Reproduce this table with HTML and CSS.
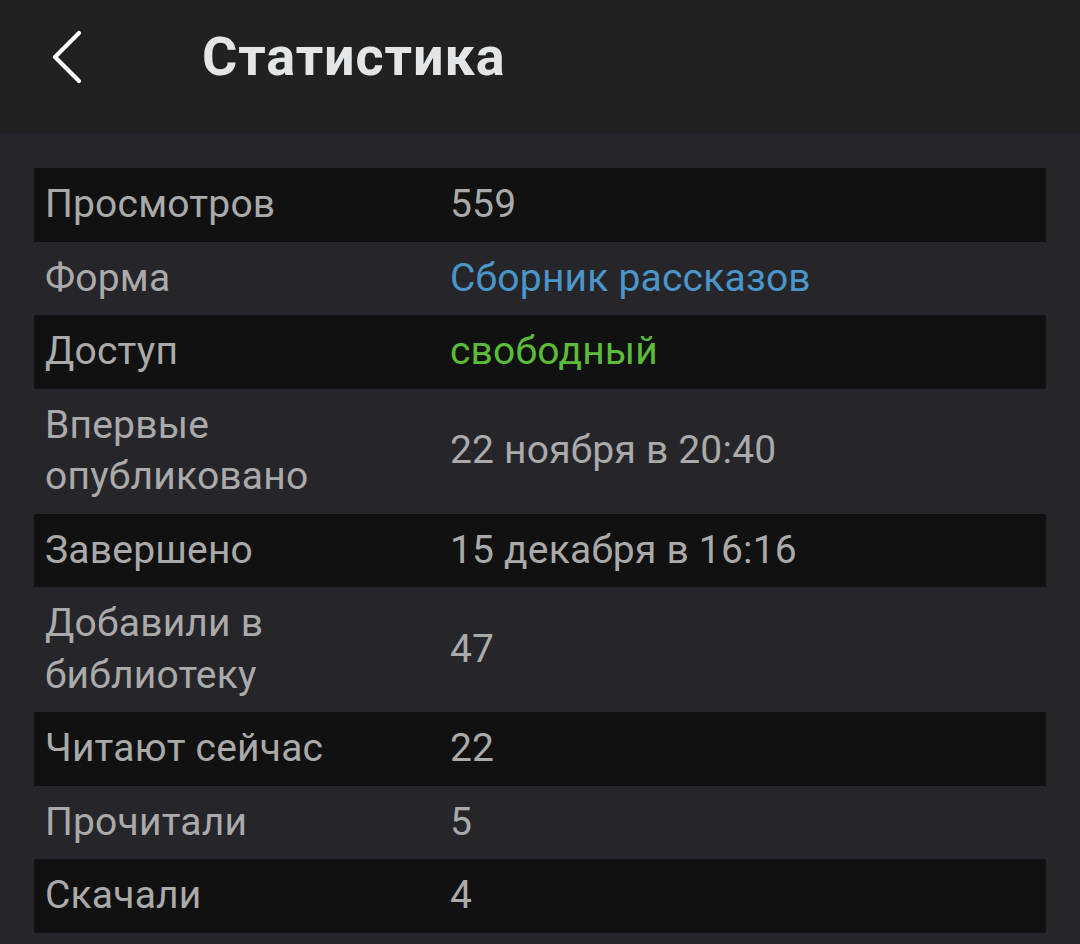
FILE: index.html
```html
<!DOCTYPE html>
<html lang="ru">
<head>
<meta charset="utf-8">
<title>Статистика</title>
<link rel="stylesheet" href="styles.css">
</head>
<body>
<header class="topbar">
  <button class="back" aria-label="Назад">
    <svg width="40" height="56" viewBox="0 0 40 56"><path d="M31 4 L7 28 L31 52" fill="none" stroke="#ffffff" stroke-width="4.2" stroke-linecap="round" stroke-linejoin="round"/></svg>
  </button>
  <h1 class="title">Статистика</h1>
</header>
<main class="content">
  <div class="table">
    <div class="row dark"><div class="label">Просмотров</div><div class="value">559</div></div>
    <div class="row"><div class="label">Форма</div><div class="value link">Сборник рассказов</div></div>
    <div class="row dark"><div class="label">Доступ</div><div class="value free">свободный</div></div>
    <div class="row"><div class="label">Впервые<br>опубликовано</div><div class="value">22 ноября в 20:40</div></div>
    <div class="row dark"><div class="label">Завершено</div><div class="value">15 декабря в 16:16</div></div>
    <div class="row"><div class="label">Добавили в<br>библиотеку</div><div class="value">47</div></div>
    <div class="row dark"><div class="label">Читают сейчас</div><div class="value">22</div></div>
    <div class="row"><div class="label">Прочитали</div><div class="value">5</div></div>
    <div class="row dark"><div class="label">Скачали</div><div class="value">4</div></div>
  </div>
</main>
</body>
</html>
```
FILE: styles.css
```css
html, body {
  margin: 0;
  padding: 0;
  background: #26262a;
  font-family: Roboto, "Noto Sans", "Liberation Sans", sans-serif;
}
.topbar {
  height: 133px;
  background: #212121;
  display: flex;
  align-items: center;
  box-sizing: border-box;
  padding: 0 0 20px 48px;
}
.back {
  background: none;
  border: 0;
  padding: 0;
  margin: 0;
  width: 40px;
  height: 56px;
  display: flex;
  cursor: pointer;
}
.title {
  margin: 0 0 0 114px;
  font-size: 54px;
  font-weight: 700;
  color: #e3e5e7;
  letter-spacing: 0.9px;
}
.content {
  padding: 35px 34px 11px 34px;
}
.table {
  display: flex;
  flex-direction: column;
}
.row {
  display: flex;
  align-items: center;
  padding: 11px 0;
  font-size: 39px;
  line-height: 51.5px;
  letter-spacing: 0.2px;
  color: #aaaaaa;
}
.row.dark {
  background: #111111;
}
.label {
  width: 405px;
  padding-left: 11px;
  flex: none;
}
.value {
  flex: 1;
}
.value.link {
  color: #4b95c9;
}
.value.free {
  color: #5dbb3a;
}
```
